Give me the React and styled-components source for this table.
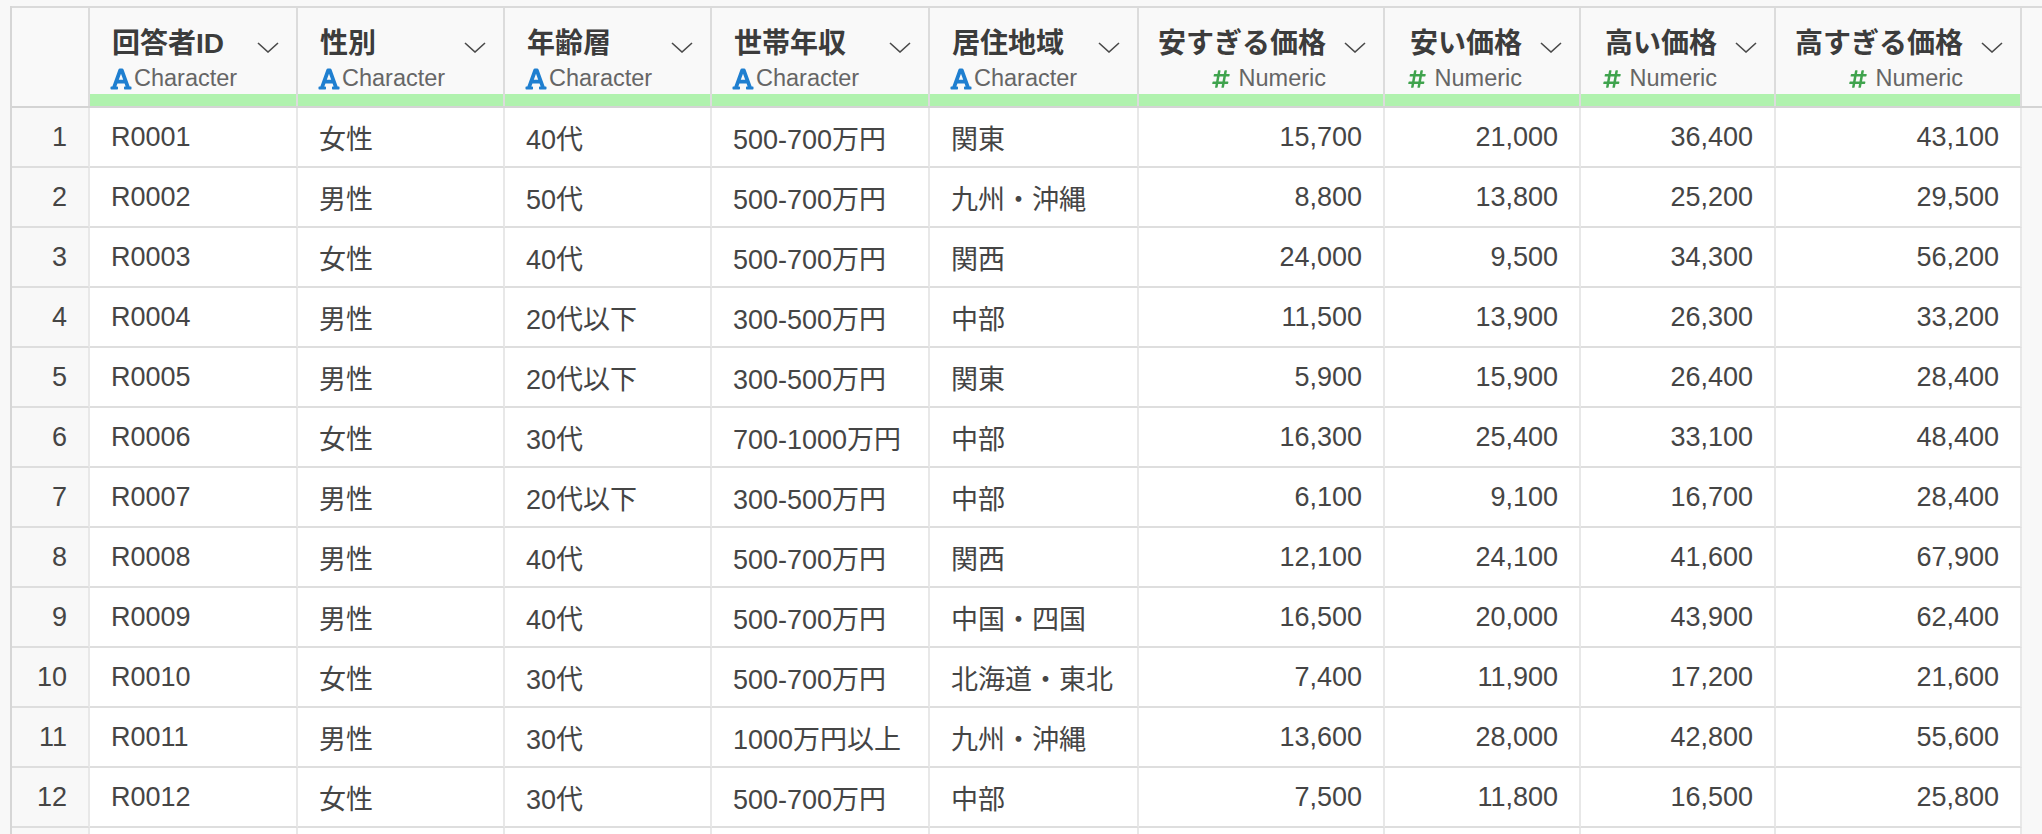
import React from "react";
import styled, { createGlobalStyle } from "styled-components";
import { FaFont, FaHashtag } from "react-icons/fa";

const GlobalStyle = createGlobalStyle`
  html, body {
    margin: 0;
    padding: 0;
    background: #f8f8f8;
    overflow: hidden;
  }
  body {
    font-family: "Liberation Sans", Arial, "Noto Sans CJK JP", sans-serif;
  }
`;

const widths = [78, 208, 207, 207, 218, 209, 246, 196, 195, 246];
const gridCols = widths.map((w) => w + "px").join(" ");

const Page = styled.div`
  height: 834px;
  overflow: hidden;
  padding-top: 6px;
  box-sizing: border-box;
`;

const Sheet = styled.div`
  margin-left: 10px;
  border-left: 2px solid #d6d6d6;
`;

const HeadBar = styled.div`
  border-top: 2px solid #dadada;
  border-bottom: 2px solid #d4d4d4;
  background: #f9f9f9;
`;

const Grid = styled.div`
  display: grid;
  grid-template-columns: ${gridCols};
`;

const HeadCell = styled.div`
  box-sizing: border-box;
  height: 98px;
  border-right: 2px solid #dcdcdc;
  display: flex;
  flex-direction: column;
`;

const HeadTop = styled.div`
  flex: 1;
  display: flex;
  align-items: flex-start;
  justify-content: ${(p) => (p.$numeric ? "flex-end" : "space-between")};
  gap: 18px;
  padding: 19px 17px 0 22px;
`;

const TitleBlock = styled.div`
  display: flex;
  flex-direction: column;
  align-items: ${(p) => (p.$numeric ? "flex-end" : "flex-start")};
`;

const Title = styled.div`
  font-family: "Liberation Sans", Arial, "Noto Sans CJK JP", sans-serif;
  font-weight: 700;
  font-size: 28px;
  line-height: 34px;
  color: #3c3c3c;
  white-space: nowrap;
`;

const TypeLabel = styled.div`
  display: flex;
  align-items: center;
  gap: ${(p) => (p.$numeric ? "8px" : "1px")};
  margin-top: 4px;
  margin-left: ${(p) => (p.$numeric ? "0" : "-3px")};
  height: 27px;
  font-size: 23.5px;
  color: #666666;
  white-space: nowrap;

  svg {
    color: ${(p) => (p.$numeric ? "#3fa34d" : "#1f7fd0")};
  }
`;

const Chevron = styled.svg`
  flex: none;
  margin-top: 15px;
`;

const GreenBar = styled.div`
  height: 12px;
  background: ${(p) => (p.$on ? "#b0f2ae" : "transparent")};
`;

const Row = styled.div`
  display: grid;
  grid-template-columns: ${gridCols};
`;

const Cell = styled.div`
  box-sizing: border-box;
  height: 60px;
  border-right: 2px solid #e8e8e8;
  border-bottom: 2px solid #dedede;
  background: ${(p) => (p.$index ? "#f8f8f8" : "#ffffff")};
  display: flex;
  align-items: center;
  justify-content: ${(p) => (p.$right ? "flex-end" : "flex-start")};
  padding: 0 21px 0 ${(p) => (p.$index ? "0" : "21px")};
  font-family: "Liberation Sans", Arial, "Noto Sans CJK JP", sans-serif;
  font-size: 27px;
  color: #454545;
  white-space: nowrap;
`;

const columns = [
  { name: "回答者ID", numeric: false },
  { name: "性別", numeric: false },
  { name: "年齢層", numeric: false },
  { name: "世帯年収", numeric: false },
  { name: "居住地域", numeric: false },
  { name: "安すぎる価格", numeric: true },
  { name: "安い価格", numeric: true },
  { name: "高い価格", numeric: true },
  { name: "高すぎる価格", numeric: true },
];

const rows = [
  ["R0001", "女性", "40代", "500-700万円", "関東", "15,700", "21,000", "36,400", "43,100"],
  ["R0002", "男性", "50代", "500-700万円", "九州・沖縄", "8,800", "13,800", "25,200", "29,500"],
  ["R0003", "女性", "40代", "500-700万円", "関西", "24,000", "9,500", "34,300", "56,200"],
  ["R0004", "男性", "20代以下", "300-500万円", "中部", "11,500", "13,900", "26,300", "33,200"],
  ["R0005", "男性", "20代以下", "300-500万円", "関東", "5,900", "15,900", "26,400", "28,400"],
  ["R0006", "女性", "30代", "700-1000万円", "中部", "16,300", "25,400", "33,100", "48,400"],
  ["R0007", "男性", "20代以下", "300-500万円", "中部", "6,100", "9,100", "16,700", "28,400"],
  ["R0008", "男性", "40代", "500-700万円", "関西", "12,100", "24,100", "41,600", "67,900"],
  ["R0009", "男性", "40代", "500-700万円", "中国・四国", "16,500", "20,000", "43,900", "62,400"],
  ["R0010", "女性", "30代", "500-700万円", "北海道・東北", "7,400", "11,900", "17,200", "21,600"],
  ["R0011", "男性", "30代", "1000万円以上", "九州・沖縄", "13,600", "28,000", "42,800", "55,600"],
  ["R0012", "女性", "30代", "500-700万円", "中部", "7,500", "11,800", "16,500", "25,800"],
];

function ChevronDown() {
  return (
    <Chevron width="22" height="11" viewBox="0 0 22 11">
      <polyline points="1,1 11,10 21,1" fill="none" stroke="#4a4a4a" strokeWidth="1.6" />
    </Chevron>
  );
}

function HeaderCell({ col }) {
  return (
    <HeadCell>
      <HeadTop $numeric={col.numeric}>
        <TitleBlock $numeric={col.numeric}>
          <Title>{col.name}</Title>
          <TypeLabel $numeric={col.numeric}>
            {col.numeric ? <FaHashtag size={20} /> : <FaFont size={24} />}
            <span>{col.numeric ? "Numeric" : "Character"}</span>
          </TypeLabel>
        </TitleBlock>
        <ChevronDown />
      </HeadTop>
      <GreenBar $on />
    </HeadCell>
  );
}

export default function App() {
  return (
    <Page>
      <GlobalStyle />
      <Sheet>
        <HeadBar>
          <Grid>
            <HeadCell>
              <GreenBar />
            </HeadCell>
            {columns.map((c) => (
              <HeaderCell key={c.name} col={c} />
            ))}
          </Grid>
        </HeadBar>
        {rows.map((r, i) => (
          <Row key={r[0]}>
            <Cell $index $right>{i + 1}</Cell>
            {r.map((v, j) => (
              <Cell key={j} $right={columns[j].numeric}>{v}</Cell>
            ))}
          </Row>
        ))}
        <Row>
          <Cell $index />
          {columns.map((c) => (
            <Cell key={c.name} />
          ))}
        </Row>
      </Sheet>
    </Page>
  );
}
